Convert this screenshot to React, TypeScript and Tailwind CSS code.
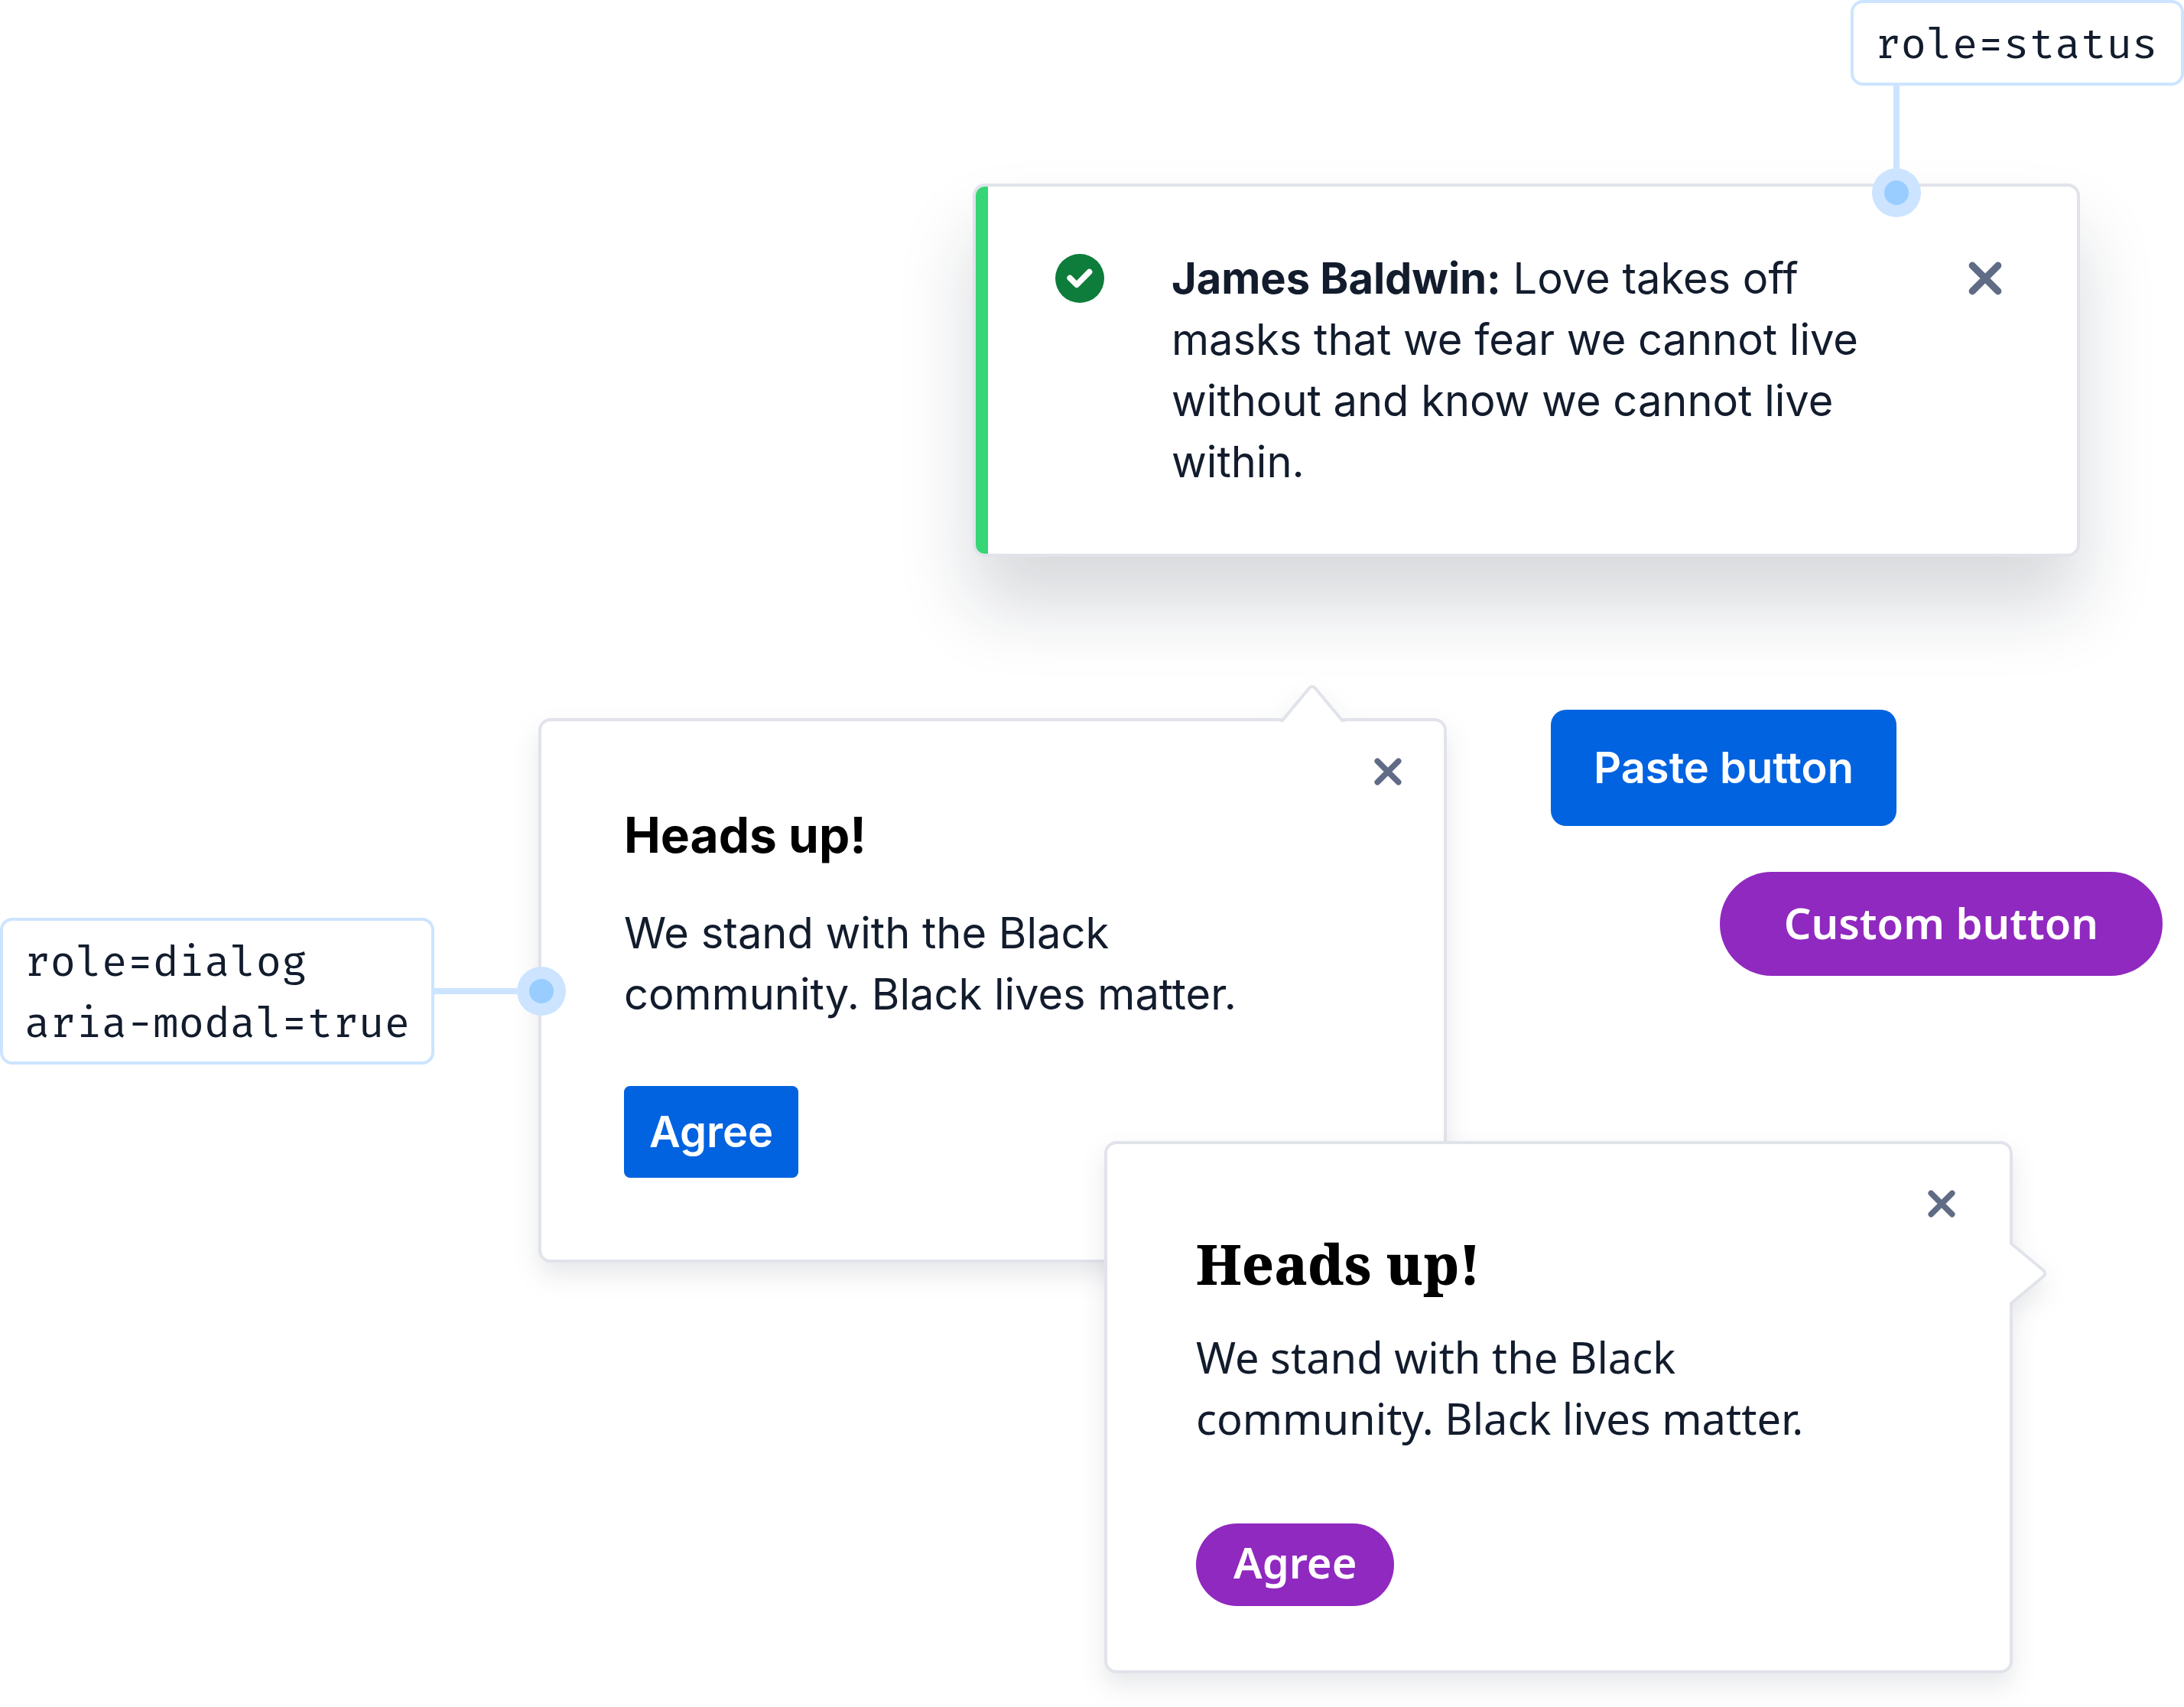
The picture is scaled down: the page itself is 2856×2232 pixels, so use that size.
import type { ReactNode } from "react";

const MONO = "font-['Fira_Mono','Fira_Code','Liberation_Mono',monospace]";
const SANS = "font-['Inter',sans-serif]";
const CUSTOM = "font-['Noto_Sans',sans-serif]";

function CloseIcon({ className }: { className: string }) {
  return (
    <svg viewBox="0 0 36 36" className={className} fill="none" stroke="currentColor" strokeWidth="7.5" strokeLinecap="round" aria-hidden="true">
      <path d="M4.25 4.25 31.75 31.75M31.75 4.25 4.25 31.75" />
    </svg>
  );
}

function SuccessIcon() {
  return (
    <svg viewBox="0 0 64 64" className="h-16 w-16" aria-hidden="true">
      <circle cx="32" cy="32" r="32" fill="#0E7C3A" />
      <path d="M19.1 31.5 28 40.4 44.6 23.5" fill="none" stroke="#fff" strokeWidth="7.5" strokeLinecap="round" strokeLinejoin="round" />
    </svg>
  );
}

function Dot() {
  return (
    <span className="flex h-16 w-16 shrink-0 items-center justify-center rounded-full bg-[#CCE4FF]">
      <span className="h-8 w-8 rounded-full bg-[#99CDFF]" />
    </span>
  );
}

function Callout({ className, children }: { className: string; children: ReactNode }) {
  return (
    <div className={`relative z-10 shrink-0 rounded-2xl border-4 border-[#CCE4FF] bg-white px-7 pt-3.5 pb-2.5 text-[56px] leading-[80px] whitespace-nowrap ${MONO} ${className}`}>
      {children}
    </div>
  );
}

function UpArrow() {
  return (
    <svg viewBox="-4 0 88 48" className="absolute -top-[47px] right-32 h-12 w-[88px]" aria-hidden="true">
      <path d="M-2.4 50 35.5 4.5Q40 -.9 44.5 4.5L82.4 50" fill="#fff" stroke="#E1E3EA" strokeWidth="4" />
    </svg>
  );
}

function RightArrow() {
  return (
    <svg viewBox="0 -4 48 88" className="absolute top-[125px] -right-12 h-[88px] w-12" aria-hidden="true">
      <path d="M-2 -2.4 43.5 35.5Q48.9 40 43.5 44.5L-2 82.4" fill="#fff" stroke="#E1E3EA" strokeWidth="4" />
    </svg>
  );
}

const POPOVER =
  "relative w-[1188px] rounded-2xl border-4 border-[#E1E3EA] bg-white [filter:drop-shadow(0_16px_16px_rgba(18,28,45,0.1))]";

export default function App() {
  return (
    <main className={`min-h-screen overflow-hidden bg-white text-[56px] leading-[80px] text-[#121C2D] ${SANS}`}>
      <div className="flex justify-end">
        <Callout className="w-[436px]">
          <code className={`block ${MONO}`}>role=status</code>
          <span className="absolute top-full left-6 flex w-16 flex-col items-center pt-1">
            <span className="h-[108px] w-2 bg-[#CCE4FF]" />
            <Dot />
          </span>
        </Callout>
      </div>

      <div
        role="status"
        className="mt-32 mr-[136px] ml-auto flex w-[1448px] overflow-hidden rounded-2xl border-4 border-[#E1E3EA] bg-white shadow-[0_64px_96px_0_rgba(18,28,45,0.17)]"
      >
        <span className="w-4 shrink-0 bg-[#36D576]" />
        <div className="flex flex-1 items-start gap-[88px] py-20 pr-20 pl-[88px]">
          <span className="flex h-20 items-center">
            <SuccessIcon />
          </span>
          <p className="flex-1">
            <strong className="font-bold">James Baldwin:</strong> Love takes off masks that we fear we cannot live without and know we cannot live within.
          </p>
          <button type="button" aria-label="Dismiss" className="flex h-20 w-20 items-center justify-center text-[#606B85]">
            <CloseIcon className="h-11 w-11" />
          </button>
        </div>
      </div>

      <div className="mt-[200px] flex items-start">
        <Callout className="mt-[272px] w-[568px]">
          <code className={`block ${MONO}`}>role=dialog</code>
          <code className={`block ${MONO}`}>aria-modal=true</code>
          <span className="absolute inset-y-0 left-full flex items-center pl-1">
            <span className="h-2 w-[108px] bg-[#CCE4FF]" />
            <Dot />
          </span>
        </Callout>

        <section role="dialog" aria-labelledby="default-title" className={`mt-[11px] ml-[136px] shrink-0 px-[108px] pt-[101px] pb-[107px] ${POPOVER}`}>
          <UpArrow />
          <button type="button" aria-label="Close" className="absolute top-12 right-[55px] text-[#606B85]">
            <CloseIcon className="h-9 w-9" />
          </button>
          <h2 id="default-title" className="text-[64px] leading-[96px] font-bold text-black">Heads up!</h2>
          <p className="mt-10 w-[840px]">We stand with the Black community. Black lives matter.</p>
          <button type="button" className="mt-20 block rounded-lg bg-[#0263E0] px-[33px] py-5 font-semibold text-white">Agree</button>
        </section>

        <div className="ml-[136px] flex flex-1 flex-col items-start">
          <button type="button" className="min-w-[452px] rounded-[20px] bg-[#0263E0] px-12 py-9 font-semibold whitespace-nowrap text-white">Paste button</button>
          <button type="button" className={`mt-[60px] mr-7 self-end rounded-full bg-[#9029BF] px-[84px] pt-[26px] pb-[30px] font-semibold whitespace-nowrap text-white ${CUSTOM}`}>
            Custom button
          </button>
        </div>
      </div>

      <section role="dialog" aria-labelledby="custom-title" className={`-mt-[159px] mr-[224px] ml-auto px-[116px] pt-[108px] pb-[84px] ${POPOVER} ${CUSTOM}`}>
        <RightArrow />
        <button type="button" aria-label="Close" className="absolute top-[60px] right-[71px] text-[#606B85]">
          <CloseIcon className="h-9 w-9" />
        </button>
        <h2 id="custom-title" className="font-['Noto_Serif','Liberation_Serif',serif] text-[72px] leading-[96px] font-extrabold text-black">Heads up!</h2>
        <p className="mt-[34px] w-[840px]">We stand with the Black community. Black lives matter.</p>
        <button type="button" className="mt-[98px] block rounded-full bg-[#9029BF] px-[49px] pt-2.5 pb-4.5 font-semibold text-white">Agree</button>
      </section>
    </main>
  );
}
